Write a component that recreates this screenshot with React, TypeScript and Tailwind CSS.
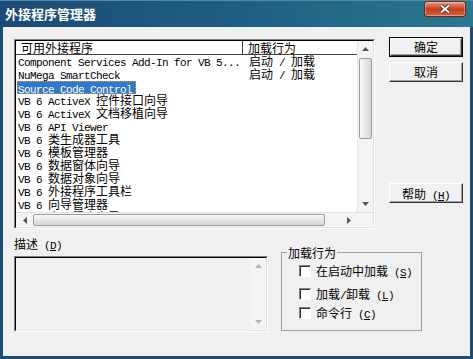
import React from 'react';

const CJK = /([\u2E80-\u9FFF\uFF00-\uFFEF]+)/;

// mixes a 6px-wide mono for ascii with 12px CJK, like SimSun does
function Txt({ s }: { s: string }) {
  return (
    <>
      {s
        .split(CJK)
        .filter(Boolean)
        .map((p, i) =>
          CJK.test(p) ? (
            <span key={i} className="inline-block h-[12px] leading-[12px] font-['Noto_Sans_CJK_SC',sans-serif] text-[12px]">
              {p}
            </span>
          ) : (
            <span key={i} className="inline-block h-[12px] leading-[12px] whitespace-pre font-['Liberation_Mono',monospace] text-[11px] tracking-[-0.6px]">
              {p}
            </span>
          )
        )}
    </>
  );
}

function Acc({ label, k }: { label: string; k: string }) {
  return (
    <span className="whitespace-pre">
      <Txt s={label + ' ('} />
      <span className="inline-block h-[12px] leading-[12px] font-['Liberation_Mono',monospace] text-[11px] tracking-[-0.6px] underline">{k}</span>
      <Txt s=")" />
    </span>
  );
}

type Dir = 'up' | 'down' | 'left' | 'right';
function Tri({ d, c = '#555555' }: { d: Dir; c?: string }) {
  const vert = d === 'up' || d === 'down';
  const w = vert ? 7 : 4;
  const h = vert ? 4 : 7;
  const pts = {
    up: '0,4 3.5,0 7,4',
    down: '0,0 7,0 3.5,4',
    left: '4,0 4,7 0,3.5',
    right: '0,0 0,7 4,3.5',
  }[d];
  return (
    <svg width={w} height={h} viewBox={`0 0 ${w} ${h}`}>
      <polygon points={pts} fill={c} />
    </svg>
  );
}

function Btn({ children, def }: { children: React.ReactNode; def?: boolean }) {
  const face = (
    <div className="h-full flex items-center justify-center bg-[#f0f0f0] border border-t-white border-l-white border-b-[#333333] border-r-[#333333] shadow-[inset_-1px_-1px_0_#a0a0a0] leading-none">
      {children}
    </div>
  );
  return def ? (
    <div className="h-[20px] border border-black">{face}</div>
  ) : (
    <div className="h-[20px]">{face}</div>
  );
}

function Check({ children, className }: { children: React.ReactNode; className: string }) {
  return (
    <div className={`flex items-center h-[12px] leading-[12px] ${className}`}>
      <div className="w-[12px] h-[12px] bg-white border border-t-[#808080] border-l-[#808080] border-b-white border-r-white shadow-[inset_1px_1px_0_#303030]" />
      <div className="ml-[5px]">{children}</div>
    </div>
  );
}

const rows: [string, string][] = [
  ['Component Services Add-In for VB 5...', '启动 / 加载'],
  ['NuMega SmartCheck', '启动 / 加载'],
  ['Source Code Control', ''],
  ['VB 6 ActiveX 控件接口向导', ''],
  ['VB 6 ActiveX 文档移植向导', ''],
  ['VB 6 API Viewer', ''],
  ['VB 6 类生成器工具', ''],
  ['VB 6 模板管理器', ''],
  ['VB 6 数据窗体向导', ''],
  ['VB 6 数据对象向导', ''],
  ['VB 6 外接程序工具栏', ''],
  ['VB 6 向导管理器', ''],
  ['VB 6 应用程序向导', ''],
];

export default function App() {
  return (
    <div className="w-[473px] h-[359px] flex flex-col bg-[#1d4d73] overflow-hidden select-none text-black">
      {/* title bar */}
      <div className="h-[27px] shrink-0 flex items-start border-t border-[#5488aa] bg-gradient-to-r from-[#1a4b74] via-[#1f5e84] to-[#297890]">
        <div className="ml-[5px] mt-[4px] text-white font-bold text-[13px] leading-[17px] font-['Noto_Sans_CJK_SC',sans-serif]">
          外接程序管理器
        </div>
        <div className="ml-auto mr-[7px] w-[42px] h-[16px] rounded-[3px] border border-[#6b2616] bg-gradient-to-b from-[#ea9a80] via-[#c63d1b] to-[#d9603a] shadow-[inset_0_0_0_1px_rgba(255,255,255,0.35)] flex items-center justify-center">
          <svg width="12" height="10" viewBox="0 0 12 10">
            <path d="M2 1.5 L10 8.5 M10 1.5 L2 8.5" stroke="#4a1a0e" strokeWidth="3.6" />
            <path d="M2 1.5 L10 8.5 M10 1.5 L2 8.5" stroke="#ffffff" strokeWidth="2" />
          </svg>
        </div>
      </div>

      {/* client */}
      <div className="flex-1 mx-[3px] mb-[3px] bg-[#f0f0f0] pl-[11px] pt-[10px]">
        <div className="flex items-start">
          {/* add-in list */}
          <div className="mt-[2px] w-[361px] h-[190px] border border-t-[#808080] border-l-[#808080] border-b-white border-r-white">
            <div className="w-full h-full flex flex-col bg-white border border-t-black border-l-black border-b-[#e3e3e3] border-r-[#e3e3e3]">
              <div className="flex flex-1 min-h-0">
                <div className="flex-1 min-w-0 overflow-hidden">
                  <div className="h-[14px] flex border-b border-[#404040] leading-[13px] whitespace-pre">
                    <div className="w-[227px] h-full pl-[5px] border-r border-[#404040]">
                      <Txt s="可用外接程序" />
                    </div>
                    <div className="w-[113px] pl-[5px]">
                      <Txt s="加载行为" />
                    </div>
                  </div>
                  {rows.map(([a, b], i) => (
                    <div key={i} className="h-[13px] flex items-center leading-[13px] whitespace-pre">
                      <div className="w-[227px] pl-[2px]">
                        {i === 2 ? (
                          <span className="inline-block h-[13px] leading-[11px] ml-[-1px] pr-[3px] border border-dotted border-[#e59a3c] bg-[#2f78cc] text-white">
                            <Txt s={a} />
                          </span>
                        ) : (
                          <Txt s={a} />
                        )}
                      </div>
                      <div className="pl-[6px]">
                        <Txt s={b} />
                      </div>
                    </div>
                  ))}
                </div>
                <div className="w-[16px] flex flex-col bg-[#f4f4f4] border-l border-[#e6e6e6]">
                  <div className="h-[16px] flex items-center justify-center">
                    <Tri d="up" />
                  </div>
                  <div className="mt-[1px] h-[81px] mx-[1px] rounded-[2px] border border-[#9c9c9c] bg-gradient-to-r from-[#f8f8f8] to-[#d6d6d6]" />
                  <div className="flex-1" />
                  <div className="h-[16px] flex items-center justify-center">
                    <Tri d="down" />
                  </div>
                </div>
              </div>
              <div className="h-[15px] shrink-0 flex bg-[#f4f4f4] border-t border-[#e0e0e0]">
                <div className="w-[17px] flex items-center justify-center">
                  <Tri d="left" />
                </div>
                <div className="w-[292px] my-[1px] rounded-[2px] border border-[#9c9c9c] bg-gradient-to-b from-[#f8f8f8] to-[#d6d6d6]" />
                <div className="flex-1" />
                <div className="w-[16px] flex items-center justify-center">
                  <Tri d="right" />
                </div>
                <div className="w-[16px] bg-[#f4f4f4]" />
              </div>
            </div>
          </div>

          {/* buttons */}
          <div className="ml-[14px] w-[74px] flex flex-col">
            <Btn def>
              <Txt s="确定" />
            </Btn>
            <div className="mt-[5px]">
              <Btn>
                <Txt s="取消" />
              </Btn>
            </div>
            <div className="mt-[101px]">
              <Btn>
                <Acc label="帮助" k="H" />
              </Btn>
            </div>
          </div>
        </div>

        <div className="flex items-start">
          {/* description */}
          <div className="w-[254px]">
            <div className="mt-[8px] h-[12px] leading-[12px]">
              <Acc label="描述" k="D" />
            </div>
            <div className="mt-[7px] h-[76px] border border-t-[#808080] border-l-[#808080] border-b-white border-r-white">
              <div className="w-full h-full flex bg-[#f0f0f0] border border-t-black border-l-black border-b-[#e3e3e3] border-r-[#e3e3e3]">
                <div className="flex-1" />
                <div className="w-[15px] flex flex-col justify-between bg-[#f4f4f4]">
                  <div className="h-[16px] flex items-center justify-center">
                    <Tri d="up" c="#b4b4b4" />
                  </div>
                  <div className="h-[16px] flex items-center justify-center">
                    <Tri d="down" c="#b4b4b4" />
                  </div>
                </div>
              </div>
            </div>
          </div>

          {/* load behaviour group */}
          <fieldset className="ml-[13px] mt-[17px] w-[141px] h-[85px] border border-[#a0a0a0]">
            <legend className="ml-[5px] px-[1px] h-[12px] leading-[12px]">
              <Txt s="加载行为" />
            </legend>
            <div className="pl-[17px]">
              <Check className="mt-[7px]">
                <Acc label="在启动中加载" k="S" />
              </Check>
              <Check className="mt-[11px]">
                <Acc label="加载/卸载" k="L" />
              </Check>
              <Check className="mt-[7px]">
                <Acc label="命令行" k="C" />
              </Check>
            </div>
          </fieldset>
        </div>
      </div>
    </div>
  );
}
